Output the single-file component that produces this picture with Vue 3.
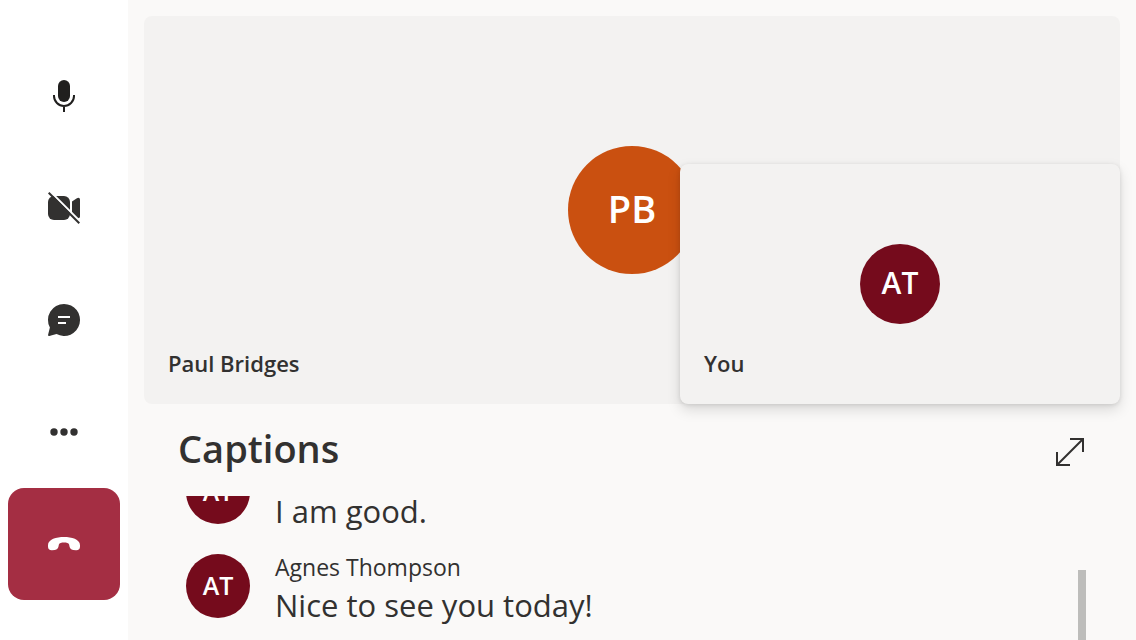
<script setup>
const captions = [
  { id: 1, initials: 'AT', name: '', text: 'I am good.' },
  { id: 2, initials: 'AT', name: 'Agnes Thompson', text: 'Nice to see you today!' },
]
</script>

<template>
  <div class="call">
    <nav class="controls" aria-label="Call controls">
      <button class="control" type="button" aria-label="Mute">
        <svg width="32" height="32" viewBox="0 0 32 32">
          <rect x="10" y="0" width="12" height="22" rx="6" fill="#201f1e" />
          <path d="M6 15v1a10 10 0 0 0 20 0v-1M16 26v6" fill="none" stroke="#201f1e" stroke-width="2" />
        </svg>
      </button>
      <button class="control" type="button" aria-label="Turn camera on">
        <svg width="32" height="32" viewBox="0 0 32 32">
          <rect x="0" y="4" width="22" height="24" rx="6" fill="#323130" />
          <path d="M24 9.500 28.500 6.500q1.500-.9 2.500-.6 1 .3 1 1.600v17q0 1.300-1 1.600-1 .3-2.500-.6L24 22.500z" fill="#323130" />
          <path d="M2.500-.3 34 31.200" stroke="#fff" stroke-width="2" />
          <path d="M.7.7 31.300 31.300" stroke="#323130" stroke-width="2" />
        </svg>
      </button>
      <button class="control" type="button" aria-label="Chat">
        <svg width="32" height="32" viewBox="0 0 32 32">
          <path d="M16 0a16 16 0 1 1-7.500 30.100L1.300 32Q-.2 32.200.1 30.700L1.900 23.600A16 16 0 0 1 16 0Z" fill="#323130" />
          <path d="M10 13h12M10 19h8" stroke="#fff" stroke-width="2" />
        </svg>
      </button>
      <button class="control" type="button" aria-label="More options">
        <svg width="32" height="32" viewBox="0 0 32 32" fill="#323130">
          <circle cx="6" cy="16" r="3.700" />
          <circle cx="16" cy="16" r="3.700" />
          <circle cx="26" cy="16" r="3.700" />
        </svg>
      </button>
      <button class="control hangup" type="button" aria-label="Leave call">
        <svg width="32" height="32" viewBox="0 0 32 32" fill="#fff">
          <path d="M16 9C23.500 9 32 11.200 32 17.200V18.500C32 21.200 30.600 22.300 28 22.200L25.200 21.900C22.800 21.600 22 20.600 21.500 18.500L21.100 16.500C20.700 15.200 18.500 14.600 16 14.600S11.300 15.200 10.900 16.500L10.500 18.500C10 20.600 9.200 21.600 6.800 21.900L4 22.200C1.400 22.300 0 21.200 0 18.500V17.200C0 11.200 8.500 9 16 9Z" />
        </svg>
      </button>
    </nav>

    <main class="content">
      <section class="stage" aria-label="Participants">
        <div class="avatar avatar-large">PB</div>
        <span class="tile-name">Paul Bridges</span>
        <div class="self-tile">
          <div class="avatar avatar-medium">AT</div>
          <span class="tile-name">You</span>
        </div>
      </section>

      <section class="captions" aria-labelledby="captions-title">
        <header class="captions-header">
          <h2 id="captions-title">Captions</h2>
          <button class="expand" type="button" aria-label="Expand captions">
            <svg width="32" height="32" viewBox="0 0 32 32" fill="none" stroke="#323130" stroke-width="2">
              <path d="M16 3h13v13M3 16v13h13M3 29 29 3" />
            </svg>
          </button>
        </header>
        <div class="captions-body">
          <ul class="caption-list">
            <li v-for="caption in captions" :key="caption.id" class="caption">
              <div class="avatar avatar-small">{{ caption.initials }}</div>
              <div class="caption-text">
                <span v-if="caption.name" class="speaker">{{ caption.name }}</span>
                <p>{{ caption.text }}</p>
              </div>
            </li>
          </ul>
          <div class="scroll-thumb"></div>
        </div>
      </section>
    </main>
  </div>
</template>

<style>
body {
  background: #faf9f8;
}
</style>

<style scoped>
.call {
  display: flex;
  height: 100vh;
  overflow: hidden;
  color: #323130;
  background: #faf9f8;
  font-family: "Segoe UI", "Open Sans", "Noto Sans", sans-serif;
}

.controls {
  display: flex;
  flex: none;
  flex-direction: column;
  justify-content: center;
  padding: 0 8px;
  background: #fff;
}

.control {
  display: grid;
  place-items: center;
  width: 112px;
  height: 112px;
  padding: 0;
  border: 0;
  border-radius: 16px;
  background: none;
}

.control svg,
.expand svg {
  display: block;
  overflow: visible;
}

.hangup {
  background: #a42e43;
}

.content {
  display: flex;
  flex: 1;
  flex-direction: column;
  min-width: 0;
  padding: 16px 16px 0;
}

.stage {
  position: relative;
  display: grid;
  flex: 1;
  place-items: center;
  min-height: 0;
  border-radius: 8px;
  background: #f3f2f1;
}

.self-tile {
  position: absolute;
  right: 0;
  bottom: 0;
  display: grid;
  place-items: center;
  width: 440px;
  max-width: 100%;
  height: 240px;
  border-radius: 8px;
  background: #f3f2f1;
  box-shadow: 0 6px 14px rgba(0, 0, 0, 0.13), 0 1px 4px rgba(0, 0, 0, 0.11);
}

.tile-name {
  position: absolute;
  bottom: 24px;
  left: 24px;
  font-size: 22px;
  font-weight: 600;
  line-height: 34px;
}

.avatar {
  display: grid;
  flex: none;
  place-items: center;
  box-sizing: border-box;
  padding-bottom: 4px;
  border-radius: 50%;
  color: #fff;
  background: #750b1c;
  font-weight: 600;
}

.avatar-large {
  width: 128px;
  height: 128px;
  background: #ca5010;
  font-size: 38px;
}

.avatar-medium {
  width: 80px;
  height: 80px;
  font-size: 30px;
}

.avatar-small {
  width: 64px;
  height: 64px;
  margin-top: 4px;
  padding-bottom: 2px;
  font-size: 25px;
}

.captions {
  display: flex;
  flex: none;
  flex-direction: column;
  height: 236px;
  padding: 0 34px;
}

.captions-header {
  display: flex;
  flex: none;
  align-items: center;
  justify-content: space-between;
  height: 92px;
}

h2 {
  margin: 0 0 4px;
  font-size: 38px;
  font-weight: 600;
  line-height: 48px;
}

.expand {
  margin-top: 4px;
  padding: 0;
  border: 0;
  background: none;
}

.captions-body {
  display: flex;
  flex: 1;
  min-height: 0;
}

.caption-list {
  display: flex;
  flex: 1;
  flex-direction: column;
  gap: 18px;
  justify-content: flex-end;
  min-width: 0;
  margin: 0;
  padding: 0 8px 14px;
  overflow: hidden;
  list-style: none;
}

.caption {
  display: flex;
  flex: none;
  gap: 25px;
  height: 76px;
}

.caption-text {
  align-self: flex-end;
}

.speaker {
  display: block;
  font-size: 23px;
  line-height: 34px;
}

p {
  margin: 0;
  font-size: 31px;
  line-height: 42px;
}

.scroll-thumb {
  align-self: flex-end;
  width: 8px;
  height: 70px;
  background: #bdbdbb;
}
</style>
